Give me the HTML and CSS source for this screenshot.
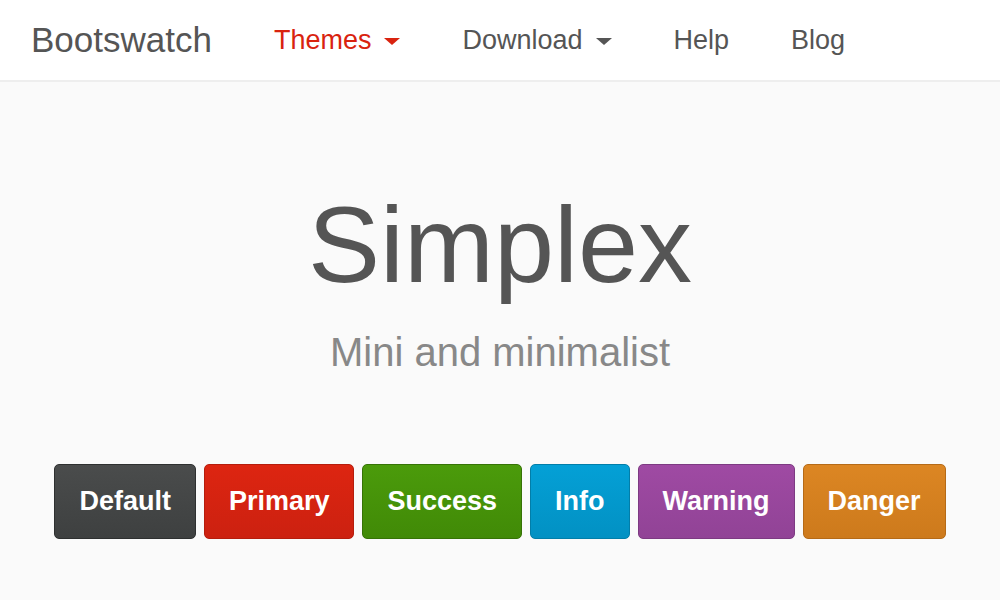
FILE: index.html
```html
<!DOCTYPE html>
<html lang="en">
<head>
<meta charset="UTF-8">
<title>Bootswatch: Simplex</title>
<link rel="stylesheet" href="styles.css">
</head>
<body>

<header class="navbar">
  <a class="brand" href="#">Bootswatch</a>
  <nav class="nav">
    <a class="nav-link active" href="#">Themes <span class="caret"></span></a>
    <a class="nav-link" href="#">Download <span class="caret"></span></a>
    <a class="nav-link" href="#">Help</a>
    <a class="nav-link" href="#">Blog</a>
  </nav>
</header>

<section class="hero">
  <h1 class="hero-title">Simplex</h1>
  <p class="hero-lead">Mini and minimalist</p>

  <div class="btn-row">
    <button class="btn btn-default">Default</button>
    <button class="btn btn-primary">Primary</button>
    <button class="btn btn-success">Success</button>
    <button class="btn btn-info">Info</button>
    <button class="btn btn-warning">Warning</button>
    <button class="btn btn-danger">Danger</button>
  </div>
</section>

</body>
</html>
```

FILE: styles.css
```css
* { margin: 0; padding: 0; box-sizing: border-box; }
body { font-family: "Liberation Sans", Arial, sans-serif; background-color: #fafafa; color: #555; }

/* navbar */
.navbar { display: flex; align-items: center; height: 82px; background-color: #fff; border-bottom: 2px solid #eee; padding-left: 31px; }
.brand { font-size: 35px; color: #555; text-decoration: none; padding-right: 31px; }
.nav { display: flex; align-items: center; }
.nav-link { font-size: 27px; color: #555; text-decoration: none; padding: 0 31px; display: flex; align-items: center; }
.nav-link.active { color: #d9230f; }
.caret { display: inline-block; width: 0; height: 0; margin-left: 13px; margin-top: 2px; border-top: 7px solid currentColor; border-left: 8px solid transparent; border-right: 8px solid transparent; }

/* hero */
.hero { text-align: center; padding-top: 109px; }
.hero-title { font-size: 108px; font-weight: normal; line-height: 1; color: #555; }
.hero-lead { font-size: 40px; line-height: 1; color: #888; margin-top: 33px; }

/* buttons */
.btn-row { display: flex; justify-content: center; gap: 8px; margin-top: 92px; }
.btn { height: 75px; padding: 0 24px; font-family: inherit; font-size: 27px; font-weight: bold; color: #fff; border: 1px solid; border-radius: 5px; cursor: pointer; }
.btn-default { background: linear-gradient(#4a4c4c, #3e4040); border-color: #2e3030; }
.btn-primary { background: linear-gradient(#dd2511, #cc2110); border-color: #b51d0d; }
.btn-success { background: linear-gradient(#4b9b0b, #418a07); border-color: #367306; }
.btn-info { background: linear-gradient(#04a0d6, #0291c3); border-color: #027ea9; }
.btn-warning { background: linear-gradient(#9f4aa3, #914396); border-color: #7d3a82; }
.btn-danger { background: linear-gradient(#dc8623, #cd7a1c); border-color: #b56a17; }
```
